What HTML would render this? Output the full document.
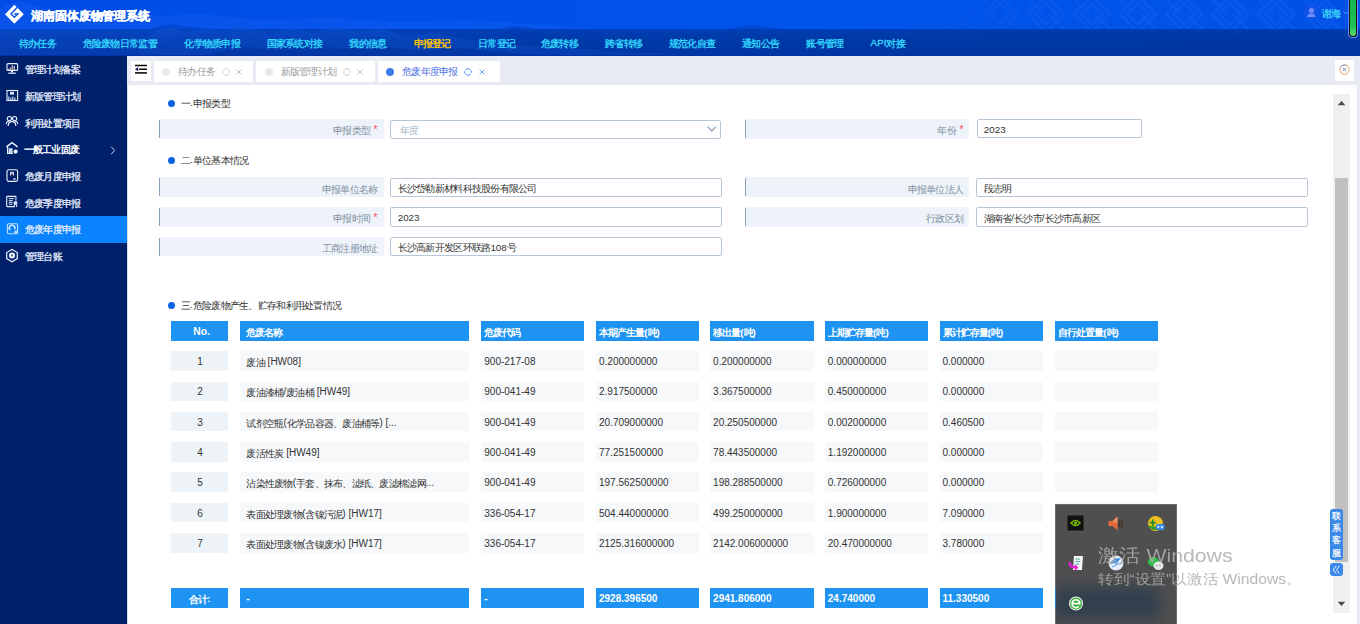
<!DOCTYPE html>
<html><head><meta charset="utf-8"><style>*{margin:0;padding:0;box-sizing:border-box}
html,body{width:1360px;height:624px;overflow:hidden;background:#fff;font-family:"Liberation Sans",sans-serif}
.b{position:absolute}
.t{position:absolute;white-space:nowrap}
</style></head><body>
<div class="b" style="left:0;top:0;width:1360px;height:29px;background:linear-gradient(90deg,#004ce6 0%,#0050ea 30%,#0054ea 60%,#0052e6 100%)"></div>
<svg class="b" style="left:0;top:0" width="1360" height="56" viewBox="0 0 1360 56"><defs>
<linearGradient id="ng" x1="0" x2="0" y1="0" y2="1"><stop offset="0" stop-color="#000" stop-opacity="0"/><stop offset="1" stop-color="#001a70" stop-opacity="0.22"/></linearGradient>
<linearGradient id="nh" x1="0" x2="1" y1="0" y2="0"><stop offset="0" stop-color="#0848c8"/><stop offset="0.15" stop-color="#0442be"/><stop offset="0.5" stop-color="#003eb4"/><stop offset="1" stop-color="#003cb0"/></linearGradient>
</defs>
<path d="M0,8 L12,3 L22,1 L34,5 L50,11 L70,7 L90,12 L120,10 L160,16 L200,14 L260,20 L330,18 L400,22 L470,20 L540,25 L600,29 L0,29 Z" fill="#1a62f2" opacity="0.35"/>
<path d="M0,29 L150,29 L160,26 L175,24 L190,27 L215,29 L500,29 L510,26 L525,27 L535,29 L730,29 L745,25 L760,26 L780,29 Z" fill="#0046d0" opacity="0.8"/>
<rect x="0" y="29" width="1360" height="27" fill="url(#nh)"/>
<path d="M140,56 L140,42 L158,30 L172,27 L186,33 L204,28 L222,31 L238,26 L252,29 L268,34 L290,28 L312,33 L334,27 L356,31 L384,29 L404,36 L430,33 L470,40 L520,45 L580,49 L650,53 L700,56 Z" fill="#0c50d2" opacity="0.55"/>
<path d="M200,56 L240,47 L270,50 L300,44 L340,49 L380,46 L420,51 L460,48 L520,54 L560,56 Z" fill="#0032a0" opacity="0.45"/>
<rect x="0" y="29" width="1360" height="27" fill="url(#ng)"/>
<rect x="0" y="55" width="1360" height="1" fill="#0032a0"/>
</svg>
<svg class="b" style="left:0;top:0" width="1360" height="29" viewBox="0 0 1360 29"><defs><linearGradient id="pg" x1="0" x2="1"><stop offset="0" stop-color="#fff" stop-opacity="0"/><stop offset="0.35" stop-color="#fff" stop-opacity="1"/></linearGradient><mask id="pm"><rect x="900" y="0" width="460" height="29" fill="url(#pg)"/></mask></defs><g mask="url(#pm)" opacity="0.38"><path d="M954,-4 L972,14 L954,32 L936,14 Z" stroke="#1a64f4" stroke-width="2.6" fill="none"/><path d="M954,3 L965,14 L954,25 L943,14 Z" stroke="#1a64f4" stroke-width="2.6" fill="none"/><path d="M977,-6 L997,14 M977,34 L957,14" stroke="#1a64f4" stroke-width="2.2" fill="none"/><path d="M1000,-4 L1018,14 L1000,32 L982,14 Z" stroke="#1a64f4" stroke-width="2.6" fill="none"/><path d="M1000,3 L1011,14 L1000,25 L989,14 Z" stroke="#1a64f4" stroke-width="2.6" fill="none"/><path d="M1023,-6 L1043,14 M1023,34 L1003,14" stroke="#1a64f4" stroke-width="2.2" fill="none"/><path d="M1046,-4 L1064,14 L1046,32 L1028,14 Z" stroke="#1a64f4" stroke-width="2.6" fill="none"/><path d="M1046,3 L1057,14 L1046,25 L1035,14 Z" stroke="#1a64f4" stroke-width="2.6" fill="none"/><path d="M1069,-6 L1089,14 M1069,34 L1049,14" stroke="#1a64f4" stroke-width="2.2" fill="none"/><path d="M1092,-4 L1110,14 L1092,32 L1074,14 Z" stroke="#1a64f4" stroke-width="2.6" fill="none"/><path d="M1092,3 L1103,14 L1092,25 L1081,14 Z" stroke="#1a64f4" stroke-width="2.6" fill="none"/><path d="M1115,-6 L1135,14 M1115,34 L1095,14" stroke="#1a64f4" stroke-width="2.2" fill="none"/><path d="M1138,-4 L1156,14 L1138,32 L1120,14 Z" stroke="#1a64f4" stroke-width="2.6" fill="none"/><path d="M1138,3 L1149,14 L1138,25 L1127,14 Z" stroke="#1a64f4" stroke-width="2.6" fill="none"/><path d="M1161,-6 L1181,14 M1161,34 L1141,14" stroke="#1a64f4" stroke-width="2.2" fill="none"/><path d="M1184,-4 L1202,14 L1184,32 L1166,14 Z" stroke="#1a64f4" stroke-width="2.6" fill="none"/><path d="M1184,3 L1195,14 L1184,25 L1173,14 Z" stroke="#1a64f4" stroke-width="2.6" fill="none"/><path d="M1207,-6 L1227,14 M1207,34 L1187,14" stroke="#1a64f4" stroke-width="2.2" fill="none"/><path d="M1230,-4 L1248,14 L1230,32 L1212,14 Z" stroke="#1a64f4" stroke-width="2.6" fill="none"/><path d="M1230,3 L1241,14 L1230,25 L1219,14 Z" stroke="#1a64f4" stroke-width="2.6" fill="none"/><path d="M1253,-6 L1273,14 M1253,34 L1233,14" stroke="#1a64f4" stroke-width="2.2" fill="none"/><path d="M1276,-4 L1294,14 L1276,32 L1258,14 Z" stroke="#1a64f4" stroke-width="2.6" fill="none"/><path d="M1276,3 L1287,14 L1276,25 L1265,14 Z" stroke="#1a64f4" stroke-width="2.6" fill="none"/><path d="M1299,-6 L1319,14 M1299,34 L1279,14" stroke="#1a64f4" stroke-width="2.2" fill="none"/><path d="M1322,-4 L1340,14 L1322,32 L1304,14 Z" stroke="#1a64f4" stroke-width="2.6" fill="none"/><path d="M1322,3 L1333,14 L1322,25 L1311,14 Z" stroke="#1a64f4" stroke-width="2.6" fill="none"/><path d="M1345,-6 L1365,14 M1345,34 L1325,14" stroke="#1a64f4" stroke-width="2.2" fill="none"/><path d="M1368,-4 L1386,14 L1368,32 L1350,14 Z" stroke="#1a64f4" stroke-width="2.6" fill="none"/><path d="M1368,3 L1379,14 L1368,25 L1357,14 Z" stroke="#1a64f4" stroke-width="2.6" fill="none"/><path d="M1391,-6 L1411,14 M1391,34 L1371,14" stroke="#1a64f4" stroke-width="2.2" fill="none"/></g></svg>
<svg class="b" style="left:0;top:0" width="28" height="29" viewBox="0 0 28 29">
<polygon points="5,14.3 14.4,4.8 23.8,14.3 14.4,23.8" fill="#fff"/>
<polyline points="17.2,7.3 11,13.9 14.4,17.3 17.8,13.9 14.2,13.9" fill="none" stroke="#0a4fe2" stroke-width="1.45" stroke-linejoin="miter"/>
</svg>
<div class="t" style="left:30.8px;top:5.52px;font-size:12px;line-height:20px;color:#fff;font-weight:bold;-webkit-text-stroke:0.35px #fff"><span style="letter-spacing:-0.05px">湖南固体废物管理系统</span></div>
<div class="b" style="left:1304px;top:4px;width:15px;height:15px;border-radius:50%;background:rgba(40,80,230,0.3)"></div>
<svg class="b" style="left:1304px;top:2px" width="15" height="15" viewBox="0 0 15 15">
<circle cx="7.4" cy="8.6" r="2.6" fill="#6f8cff"/><path d="M3.2,15.2 Q3.2,11.6 7.4,11.6 Q11.6,11.6 11.6,15.2 Z" fill="#6f8cff"/></svg>
<div class="t" style="left:1322px;top:4.40px;font-size:9.8px;line-height:20px;color:#40d8f8;font-weight:normal;-webkit-text-stroke:0.3px #40d8f8"><span style="letter-spacing:-0.73px">谢海</span></div>
<svg class="b" style="left:1343px;top:10px" width="6" height="6" viewBox="0 0 6 6"><polyline points="0.5,1.5 3,4 5.5,1.5" stroke="#6a9cff" fill="none" stroke-width="0.9"/></svg>
<div class="t" style="left:18.75px;top:33.50px;font-size:9.8px;line-height:20px;color:#36dcff;font-weight:normal;-webkit-text-stroke:0.3px #36dcff"><span style="letter-spacing:-0.73px">待办任务</span></div>
<div class="t" style="left:82.7px;top:33.50px;font-size:9.8px;line-height:20px;color:#36dcff;font-weight:normal;-webkit-text-stroke:0.3px #36dcff"><span style="letter-spacing:-0.73px">危险废物日常监管</span></div>
<div class="t" style="left:184.4px;top:33.50px;font-size:9.8px;line-height:20px;color:#36dcff;font-weight:normal;-webkit-text-stroke:0.3px #36dcff"><span style="letter-spacing:-0.73px">化学物质申报</span></div>
<div class="t" style="left:266.5px;top:33.50px;font-size:9.8px;line-height:20px;color:#36dcff;font-weight:normal;-webkit-text-stroke:0.3px #36dcff"><span style="letter-spacing:-0.73px">国家系统对接</span></div>
<div class="t" style="left:349.3px;top:33.50px;font-size:9.8px;line-height:20px;color:#36dcff;font-weight:normal;-webkit-text-stroke:0.3px #36dcff"><span style="letter-spacing:-0.73px">我的信息</span></div>
<div class="t" style="left:413.6px;top:33.50px;font-size:9.8px;line-height:20px;color:#ffc400;font-weight:bold;"><span style="letter-spacing:-0.73px">申报登记</span></div>
<div class="t" style="left:478px;top:33.50px;font-size:9.8px;line-height:20px;color:#36dcff;font-weight:normal;-webkit-text-stroke:0.3px #36dcff"><span style="letter-spacing:-0.73px">日常登记</span></div>
<div class="t" style="left:540.8px;top:33.50px;font-size:9.8px;line-height:20px;color:#36dcff;font-weight:normal;-webkit-text-stroke:0.3px #36dcff"><span style="letter-spacing:-0.73px">危废转移</span></div>
<div class="t" style="left:605.1px;top:33.50px;font-size:9.8px;line-height:20px;color:#36dcff;font-weight:normal;-webkit-text-stroke:0.3px #36dcff"><span style="letter-spacing:-0.73px">跨省转移</span></div>
<div class="t" style="left:668.8px;top:33.50px;font-size:9.8px;line-height:20px;color:#36dcff;font-weight:normal;-webkit-text-stroke:0.3px #36dcff"><span style="letter-spacing:-0.73px">规范化自查</span></div>
<div class="t" style="left:742px;top:33.50px;font-size:9.8px;line-height:20px;color:#36dcff;font-weight:normal;-webkit-text-stroke:0.3px #36dcff"><span style="letter-spacing:-0.73px">通知公告</span></div>
<div class="t" style="left:806.3px;top:33.50px;font-size:9.8px;line-height:20px;color:#36dcff;font-weight:normal;-webkit-text-stroke:0.3px #36dcff"><span style="letter-spacing:-0.73px">账号管理</span></div>
<div class="t" style="left:870.6px;top:33.50px;font-size:9.8px;line-height:20px;color:#36dcff;font-weight:normal;-webkit-text-stroke:0.3px #36dcff"><span style="position:relative;top:-0.5px">API</span><span style="letter-spacing:-0.73px">对接</span></div>
<div class="b" style="left:1348px;top:0;width:10px;height:38px;background:#5e8cff;border-radius:0 0 4px 4px"></div>
<div class="b" style="left:1349px;top:0;width:8px;height:37px;background:#141414;border-radius:0 0 3px 3px"></div>
<div class="b" style="left:1350px;top:0;width:6px;height:36px;background:linear-gradient(#18b44e,#1cc054 70%,#5ada6c);border-radius:0 0 3px 3px"></div>
<div class="b" style="left:0px;top:56px;width:127.00px;height:568.00px;background:#00216a;"></div>
<div class="b" style="left:0px;top:216px;width:127.00px;height:27.00px;background:#0a84fe;"></div>
<div class="t" style="left:24.9px;top:60.20px;font-size:9.8px;line-height:20px;color:#eaf0ff;font-weight:normal;-webkit-text-stroke:0.25px #eaf0ff"><span style="letter-spacing:-0.73px">管理计划备案</span></div>
<div class="t" style="left:24.9px;top:86.90px;font-size:9.8px;line-height:20px;color:#eaf0ff;font-weight:normal;-webkit-text-stroke:0.25px #eaf0ff"><span style="letter-spacing:-0.73px">新版管理计划</span></div>
<div class="t" style="left:24.9px;top:113.60px;font-size:9.8px;line-height:20px;color:#eaf0ff;font-weight:normal;-webkit-text-stroke:0.25px #eaf0ff"><span style="letter-spacing:-0.73px">利用处置项目</span></div>
<div class="t" style="left:23.6px;top:140.30px;font-size:9.8px;line-height:20px;color:#fff;font-weight:bold;"><span style="letter-spacing:-0.73px">一般工业固废</span></div>
<div class="t" style="left:24.9px;top:167.00px;font-size:9.8px;line-height:20px;color:#eaf0ff;font-weight:normal;-webkit-text-stroke:0.25px #eaf0ff"><span style="letter-spacing:-0.73px">危废月度申报</span></div>
<div class="t" style="left:24.9px;top:193.70px;font-size:9.8px;line-height:20px;color:#eaf0ff;font-weight:normal;-webkit-text-stroke:0.25px #eaf0ff"><span style="letter-spacing:-0.73px">危废季度申报</span></div>
<div class="t" style="left:24.9px;top:220.40px;font-size:9.8px;line-height:20px;color:#eaf0ff;font-weight:normal;-webkit-text-stroke:0.25px #eaf0ff"><span style="letter-spacing:-0.73px">危废年度申报</span></div>
<div class="t" style="left:24.9px;top:247.10px;font-size:9.8px;line-height:20px;color:#eaf0ff;font-weight:normal;-webkit-text-stroke:0.25px #eaf0ff"><span style="letter-spacing:-0.73px">管理台账</span></div>
<svg class="b" style="left:110px;top:146px" width="6" height="9" viewBox="0 0 6 9"><polyline points="1.2,0.8 4.6,4.5 1.2,8.2" stroke="#c8d4f0" fill="none" stroke-width="1"/></svg>
<svg class="b" style="left:2px;top:60px" width="20" height="20" viewBox="0 0 20 20"><rect x="5" y="3.6" width="10.6" height="6.8" rx="1" stroke="#e8f0ff" fill="none" stroke-width="1.1"/><path d="M6.3,10 L6.3,9 M8.2,10 L8.2,7.5 M10.2,10 L10.2,5.2 M12.2,10 L12.2,6" stroke="#f0d8c8" stroke-width="1.1"/><rect x="9" y="10.4" width="2" height="2" fill="#e8f0ff"/><rect x="6.3" y="12.6" width="7.6" height="1.2" fill="#e8f0ff"/></svg>
<svg class="b" style="left:2px;top:86px" width="20" height="20" viewBox="0 0 20 20"><rect x="5" y="4.5" width="10.6" height="10" stroke="#e8f0ff" fill="none" stroke-width="1.1"/><path d="M6.8,14 L6.8,10.5 M8.8,14 L8.8,11.5 M10.8,14 L10.8,10.5 M12.8,14 L12.8,11.5" stroke="#cfe6ff" stroke-width="1.1"/><rect x="8" y="5.8" width="4" height="2.8" fill="#d8e4ff"/></svg>
<svg class="b" style="left:2px;top:112px" width="20" height="20" viewBox="0 0 20 20"><circle cx="7.4" cy="6.6" r="2.1" stroke="#e8f0ff" fill="none" stroke-width="1.1"/><circle cx="12.6" cy="6.6" r="2.1" stroke="#e8f0ff" fill="none" stroke-width="1.1"/><path d="M4.3,12.2 Q4.3,9.2 7.6,9" stroke="#e8f0ff" fill="none" stroke-width="1.1"/><path d="M15.8,12.2 Q15.8,9.2 12.4,9" stroke="#e8f0ff" fill="none" stroke-width="1.1"/><path d="M6.2,14 Q6.2,9.6 10,9.6 Q13.8,9.6 13.8,14" stroke="#e8f0ff" fill="none" stroke-width="1.2"/></svg>
<svg class="b" style="left:2px;top:139px" width="20" height="20" viewBox="0 0 20 20"><path d="M4.4,7.8 L10,3.6 L15.6,7.8" stroke="#e8f0ff" fill="none" stroke-width="1.5"/><path d="M5.6,7.6 L5.6,14.5 L11,14.5" stroke="#e8f0ff" fill="none" stroke-width="1.2"/><rect x="6.6" y="9.2" width="4" height="5" fill="#c8d8f0"/><circle cx="13.6" cy="12.6" r="2.1" fill="#f0f4ff"/></svg>
<svg class="b" style="left:2px;top:166px" width="20" height="20" viewBox="0 0 20 20"><rect x="5" y="3.8" width="10.6" height="11.6" rx="1.6" stroke="#e8f0ff" fill="none" stroke-width="1.1"/><path d="M8.5,9.5 L8.5,6.3 L11.5,6.3 L11.5,9.5 M8.5,7.8 L11.5,7.8" stroke="#f0e0e8" stroke-width="1" fill="none"/><rect x="11.2" y="12.2" width="2.6" height="1.6" rx=".8" fill="#f0f0ff"/></svg>
<svg class="b" style="left:2px;top:192px" width="20" height="20" viewBox="0 0 20 20"><path d="M12.8,14.6 L5.3,14.6 Q4.7,14.6 4.7,14 L4.7,5 Q4.7,4.4 5.3,4.4 L13.3,4.4 Q13.9,4.4 13.9,5 L13.9,8.6" stroke="#e8f0ff" fill="none" stroke-width="1.1"/><path d="M6.8,6.6 L11.8,6.6 M6.8,8.6 L10.6,8.6 M6.8,10.4 L10.6,10.4 M6.8,12.2 L10.6,12.2" stroke="#e8e8ff" stroke-width="1"/><circle cx="13.5" cy="11" r="2" fill="#d8e0ff"/><path d="M12.5,12.6 L12.2,15 M14.5,12.6 L14.8,15" stroke="#f0f0ff" stroke-width="1"/></svg>
<svg class="b" style="left:2px;top:219px" width="20" height="20" viewBox="0 0 20 20"><rect x="5.4" y="4.8" width="10.2" height="10" rx="1.2" stroke="#bfe2ff" fill="none" stroke-width="1.1"/><path d="M8.2,11 A2.8,2.8 0 1 1 12.6,10.2" stroke="#d8ecff" fill="none" stroke-width="1.5"/><circle cx="13.8" cy="13" r="1.8" fill="#a8d4ff"/></svg>
<svg class="b" style="left:2px;top:246px" width="20" height="20" viewBox="0 0 20 20"><path d="M10,3.4 L15.3,6.5 L15.3,12.6 L10,15.7 L4.7,12.6 L4.7,6.5 Z" stroke="#e8f0ff" fill="none" stroke-width="1.2"/><circle cx="10" cy="9.5" r="3" fill="#f4f8ff"/><circle cx="10" cy="9.5" r="0.9" fill="#30306a"/></svg>
<div class="b" style="left:127px;top:56px;width:1233.00px;height:29.00px;background:#e8ebf3;"></div>
<div class="b" style="left:130.9px;top:60.9px;width:20.10px;height:20.00px;background:#fff;"></div>
<svg class="b" style="left:130px;top:58px" width="22" height="22" viewBox="0 0 22 22">
<rect x="5" y="6.75" width="11.9" height="1.5" fill="#000"/>
<rect x="9.2" y="10.5" width="7.7" height="1.5" fill="#000"/>
<rect x="5" y="14.15" width="11.9" height="1.5" fill="#000"/>
<polygon points="5,11.25 8.2,9.3 8.2,13.2" fill="#101060"/>
</svg>
<div class="b" style="left:154.1px;top:61px;width:98.90px;height:20.80px;background:#fff;"></div>
<div class="b" style="left:162px;top:68px;width:8px;height:8px;border-radius:50%;background:#e8e9ec"></div>
<div class="t" style="left:178px;top:62.10px;font-size:9.8px;line-height:20px;color:#9a9a9a;font-weight:normal;"><span style="letter-spacing:-0.73px">待办任务</span></div>
<svg class="b" style="left:220.7px;top:66.6px" width="10" height="10" viewBox="0 0 10 10"><path d="M3.11,2.3 A3.3,3.3 0 0 1 8.19,5.85 M6.89,7.7 A3.3,3.3 0 0 1 1.9,3.87" stroke="#cfd3da" fill="none" stroke-width="1"/><circle cx="3.2" cy="2.4" r="0.75" fill="#cfd3da"/><circle cx="6.8" cy="7.6" r="0.75" fill="#cfd3da"/></svg>
<svg class="b" style="left:235.3px;top:68px" width="8" height="8" viewBox="0 0 8 8"><path d="M1.6,1.6 L6.4,6.4 M6.4,1.6 L1.6,6.4" stroke="#b8bcc4" stroke-width="1"/></svg>
<div class="b" style="left:255.7px;top:61px;width:119.50px;height:20.80px;background:#fff;"></div>
<div class="b" style="left:264.7px;top:68px;width:8px;height:8px;border-radius:50%;background:#e8e9ec"></div>
<div class="t" style="left:280.6px;top:62.10px;font-size:9.8px;line-height:20px;color:#9a9a9a;font-weight:normal;"><span style="letter-spacing:-0.73px">新版管理计划</span></div>
<svg class="b" style="left:342px;top:66.6px" width="10" height="10" viewBox="0 0 10 10"><path d="M3.11,2.3 A3.3,3.3 0 0 1 8.19,5.85 M6.89,7.7 A3.3,3.3 0 0 1 1.9,3.87" stroke="#cfd3da" fill="none" stroke-width="1"/><circle cx="3.2" cy="2.4" r="0.75" fill="#cfd3da"/><circle cx="6.8" cy="7.6" r="0.75" fill="#cfd3da"/></svg>
<svg class="b" style="left:356.3px;top:68px" width="8" height="8" viewBox="0 0 8 8"><path d="M1.6,1.6 L6.4,6.4 M6.4,1.6 L1.6,6.4" stroke="#b8bcc4" stroke-width="1"/></svg>
<div class="b" style="left:377.7px;top:61px;width:122.30px;height:20.80px;background:#fff;"></div>
<div class="b" style="left:386px;top:68px;width:8px;height:8px;border-radius:50%;background:#3b7be8"></div>
<div class="t" style="left:402px;top:62.10px;font-size:9.8px;line-height:20px;color:#4d6ee2;font-weight:normal;"><span style="letter-spacing:-0.73px">危废年度申报</span></div>
<svg class="b" style="left:463.4px;top:66.6px" width="10" height="10" viewBox="0 0 10 10"><path d="M3.11,2.3 A3.3,3.3 0 0 1 8.19,5.85 M6.89,7.7 A3.3,3.3 0 0 1 1.9,3.87" stroke="#5c9cf5" fill="none" stroke-width="1"/><circle cx="3.2" cy="2.4" r="0.75" fill="#5c9cf5"/><circle cx="6.8" cy="7.6" r="0.75" fill="#5c9cf5"/></svg>
<svg class="b" style="left:478.3px;top:68px" width="8" height="8" viewBox="0 0 8 8"><path d="M1.6,1.6 L6.4,6.4 M6.4,1.6 L1.6,6.4" stroke="#6aa0f2" stroke-width="1"/></svg>
<div class="b" style="left:1334.8px;top:59.6px;width:19.60px;height:21.70px;background:#fff;"></div>
<svg class="b" style="left:1338px;top:63px" width="13" height="13" viewBox="0 0 13 13">
<circle cx="6.5" cy="6.6" r="4.7" stroke="#e6a25a" fill="none" stroke-width="1"/>
<path d="M2.3,4.6 A4.7,4.7 0 0 1 8.6,2.4" stroke="#7aa0e6" fill="none" stroke-width="1"/>
<path d="M4.8,4.9 L8.2,8.3 M8.2,4.9 L4.8,8.3" stroke="#7080a8" stroke-width="1"/>
</svg>
<div class="b" style="left:128px;top:85px;width:1229.00px;height:539.00px;background:#fff;"></div>
<div class="b" style="left:127px;top:85px;width:1.00px;height:539.00px;background:#d8dce4;"></div>
<div class="b" style="left:167.5px;top:99.7px;width:7px;height:7px;border-radius:50%;background:#0b63e0"></div>
<div class="t" style="left:180.8px;top:94.00px;font-size:9.8px;line-height:20px;color:#333;font-weight:normal;"><span style="letter-spacing:-0.73px">一</span><span style="position:relative;top:-1.0px">.</span><span style="letter-spacing:-0.73px">申报类型</span></div>
<div class="b" style="left:159px;top:119px;width:224.60px;height:19.50px;background:#eef3f9;border-radius:2px"></div>
<div class="b" style="left:159px;top:119.5px;width:1.00px;height:18.50px;background:#8ba0b6;"></div>
<div class="t" style="right:989.9px;top:121.15px;font-size:9.8px;line-height:20px;color:#8090a4;font-weight:normal;text-align:right;"><span style="letter-spacing:-0.73px">申报类型</span></div>
<div class="t" style="left:373.6px;top:122.65px;font-size:10px;line-height:14px;color:#f5475a">*</div>
<div class="b" style="left:390.2px;top:120px;width:331.30px;height:18.50px;border:1px solid #b8c7d8;border-radius:2px;background:#fff"></div>
<div class="t" style="left:399.8px;top:120.55px;font-size:9.8px;line-height:20px;color:#a9b6c4;font-weight:normal;"><span style="letter-spacing:-0.73px">年度</span></div>
<svg class="b" style="left:706px;top:125px" width="12" height="8" viewBox="0 0 12 8"><polyline points="1.6,1.8 5.8,5.9 10,1.8" fill="none" stroke="#a0b2c4" stroke-width="1.6"/></svg>
<div class="b" style="left:745.4px;top:119px;width:224.10px;height:19.50px;background:#eef3f9;border-radius:2px"></div>
<div class="b" style="left:745.4px;top:119.5px;width:1.00px;height:18.50px;background:#8ba0b6;"></div>
<div class="t" style="right:404.0px;top:121.15px;font-size:9.8px;line-height:20px;color:#8090a4;font-weight:normal;text-align:right;"><span style="letter-spacing:-0.73px">年份</span></div>
<div class="t" style="left:959.5px;top:122.65px;font-size:10px;line-height:14px;color:#f5475a">*</div>
<div class="b" style="left:976.5px;top:119.4px;width:165.00px;height:19.10px;border:1px solid #b8c7d8;border-radius:2px;background:#fff"></div>
<div class="t" style="left:983.8px;top:120.45px;font-size:9.8px;line-height:20px;color:#333;font-weight:normal;"><span style="position:relative;top:-0.8px">2023</span></div>
<div class="b" style="left:167.5px;top:156.5px;width:7px;height:7px;border-radius:50%;background:#0b63e0"></div>
<div class="t" style="left:180.8px;top:150.80px;font-size:9.8px;line-height:20px;color:#333;font-weight:normal;"><span style="letter-spacing:-0.73px">二</span><span style="position:relative;top:-1.0px">.</span><span style="letter-spacing:-0.73px">单位基本情况</span></div>
<div class="b" style="left:159px;top:177.3px;width:224.60px;height:19.60px;background:#eef3f9;border-radius:2px"></div>
<div class="b" style="left:159px;top:177.8px;width:1.00px;height:18.60px;background:#8ba0b6;"></div>
<div class="t" style="right:982.5999999999999px;top:179.50px;font-size:9.8px;line-height:20px;color:#8090a4;font-weight:normal;text-align:right;"><span style="letter-spacing:-0.73px">申报单位名称</span></div>
<div class="b" style="left:390.4px;top:177.6px;width:331.30px;height:19.30px;border:1px solid #b8c7d8;border-radius:2px;background:#fff"></div>
<div class="t" style="left:397.7px;top:178.75px;font-size:9.8px;line-height:20px;color:#333;font-weight:normal;"><span style="letter-spacing:-0.73px">长沙岱勒新材料科技股份有限公司</span></div>
<div class="b" style="left:745.4px;top:177.3px;width:224.10px;height:19.60px;background:#eef3f9;border-radius:2px"></div>
<div class="b" style="left:745.4px;top:177.8px;width:1.00px;height:18.60px;background:#8ba0b6;"></div>
<div class="t" style="right:396.70000000000005px;top:179.50px;font-size:9.8px;line-height:20px;color:#8090a4;font-weight:normal;text-align:right;"><span style="letter-spacing:-0.73px">申报单位法人</span></div>
<div class="b" style="left:976.2px;top:177.6px;width:331.50px;height:19.30px;border:1px solid #b8c7d8;border-radius:2px;background:#fff"></div>
<div class="t" style="left:983.5px;top:178.75px;font-size:9.8px;line-height:20px;color:#333;font-weight:normal;"><span style="letter-spacing:-0.73px">段志明</span></div>
<div class="b" style="left:159px;top:207px;width:224.60px;height:19.70px;background:#eef3f9;border-radius:2px"></div>
<div class="b" style="left:159px;top:207.5px;width:1.00px;height:18.70px;background:#8ba0b6;"></div>
<div class="t" style="right:989.9px;top:209.25px;font-size:9.8px;line-height:20px;color:#8090a4;font-weight:normal;text-align:right;"><span style="letter-spacing:-0.73px">申报时间</span></div>
<div class="t" style="left:373.6px;top:210.75px;font-size:10px;line-height:14px;color:#f5475a">*</div>
<div class="b" style="left:390.4px;top:207.3px;width:331.30px;height:19.40px;border:1px solid #b8c7d8;border-radius:2px;background:#fff"></div>
<div class="t" style="left:397.7px;top:208.50px;font-size:9.8px;line-height:20px;color:#333;font-weight:normal;"><span style="position:relative;top:-0.8px">2023</span></div>
<div class="b" style="left:745.4px;top:207px;width:224.10px;height:19.70px;background:#eef3f9;border-radius:2px"></div>
<div class="b" style="left:745.4px;top:207.5px;width:1.00px;height:18.70px;background:#8ba0b6;"></div>
<div class="t" style="right:396.70000000000005px;top:209.25px;font-size:9.8px;line-height:20px;color:#8090a4;font-weight:normal;text-align:right;"><span style="letter-spacing:-0.73px">行政区划</span></div>
<div class="b" style="left:976.2px;top:207.3px;width:331.50px;height:19.40px;border:1px solid #b8c7d8;border-radius:2px;background:#fff"></div>
<div class="t" style="left:983.5px;top:208.50px;font-size:9.8px;line-height:20px;color:#333;font-weight:normal;"><span style="letter-spacing:-0.73px">湖南省</span><span style="position:relative;top:-0.8px">/</span><span style="letter-spacing:-0.73px">长沙市</span><span style="position:relative;top:-0.8px">/</span><span style="letter-spacing:-0.73px">长沙市高新区</span></div>
<div class="b" style="left:159px;top:237.3px;width:224.60px;height:19.20px;background:#eef3f9;border-radius:2px"></div>
<div class="b" style="left:159px;top:237.8px;width:1.00px;height:18.20px;background:#8ba0b6;"></div>
<div class="t" style="right:982.5999999999999px;top:239.30px;font-size:9.8px;line-height:20px;color:#8090a4;font-weight:normal;text-align:right;"><span style="letter-spacing:-0.73px">工商注册地址</span></div>
<div class="b" style="left:390.4px;top:237.3px;width:331.30px;height:19.20px;border:1px solid #b8c7d8;border-radius:2px;background:#fff"></div>
<div class="t" style="left:397.7px;top:238.40px;font-size:9.8px;line-height:20px;color:#333;font-weight:normal;"><span style="letter-spacing:-0.73px">长沙高新开发区环联路</span><span style="position:relative;top:-0.8px">108</span><span style="letter-spacing:-0.73px">号</span></div>
<div class="b" style="left:167.5px;top:301.5px;width:7px;height:7px;border-radius:50%;background:#0b63e0"></div>
<div class="t" style="left:180.8px;top:295.80px;font-size:9.8px;line-height:20px;color:#333;font-weight:normal;"><span style="letter-spacing:-0.73px">三</span><span style="position:relative;top:-1.0px">.</span><span style="letter-spacing:-0.73px">危险废物产生、贮存和利用处置情况</span></div>
<div class="b" style="left:171px;top:320.9px;width:57.00px;height:20.10px;background:#1f93f1;"></div>
<div class="t" style="left:101.5px;width:200px;text-align:center;top:322.50px;font-size:9.8px;line-height:20px;color:#fff;font-weight:bold;"><span style="position:relative;top:-0.3px;font-size:10.3px">No.</span></div>
<div class="b" style="left:240px;top:320.9px;width:228.60px;height:20.10px;background:#1f93f1;"></div>
<div class="t" style="left:246.3px;top:323.10px;font-size:9.8px;line-height:20px;color:#fff;font-weight:bold;"><span style="letter-spacing:-0.95px">危废名称</span></div>
<div class="b" style="left:481px;top:320.9px;width:102.90px;height:20.10px;background:#1f93f1;"></div>
<div class="t" style="left:484.3px;top:323.10px;font-size:9.8px;line-height:20px;color:#fff;font-weight:bold;"><span style="letter-spacing:-0.95px">危废代码</span></div>
<div class="b" style="left:596px;top:320.9px;width:103.10px;height:20.10px;background:#1f93f1;"></div>
<div class="t" style="left:599.0px;top:323.10px;font-size:9.8px;line-height:20px;color:#fff;font-weight:bold;"><span style="letter-spacing:-0.95px">本期产生量</span><span style="position:relative;top:-0.5px">(</span><span style="letter-spacing:-0.95px">吨</span><span style="position:relative;top:-0.5px">)</span></div>
<div class="b" style="left:710.1px;top:320.9px;width:103.70px;height:20.10px;background:#1f93f1;"></div>
<div class="t" style="left:713.1px;top:323.10px;font-size:9.8px;line-height:20px;color:#fff;font-weight:bold;"><span style="letter-spacing:-0.95px">移出量</span><span style="position:relative;top:-0.5px">(</span><span style="letter-spacing:-0.95px">吨</span><span style="position:relative;top:-0.5px">)</span></div>
<div class="b" style="left:824.8px;top:320.9px;width:103.70px;height:20.10px;background:#1f93f1;"></div>
<div class="t" style="left:827.8px;top:323.10px;font-size:9.8px;line-height:20px;color:#fff;font-weight:bold;"><span style="letter-spacing:-0.95px">上期贮存量</span><span style="position:relative;top:-0.5px">(</span><span style="letter-spacing:-0.95px">吨</span><span style="position:relative;top:-0.5px">)</span></div>
<div class="b" style="left:939.5px;top:320.9px;width:103.70px;height:20.10px;background:#1f93f1;"></div>
<div class="t" style="left:942.5px;top:323.10px;font-size:9.8px;line-height:20px;color:#fff;font-weight:bold;"><span style="letter-spacing:-0.95px">累计贮存量</span><span style="position:relative;top:-0.5px">(</span><span style="letter-spacing:-0.95px">吨</span><span style="position:relative;top:-0.5px">)</span></div>
<div class="b" style="left:1055px;top:320.9px;width:102.90px;height:20.10px;background:#1f93f1;"></div>
<div class="t" style="left:1058.0px;top:323.10px;font-size:9.8px;line-height:20px;color:#fff;font-weight:bold;"><span style="letter-spacing:-0.95px">自行处置量</span><span style="position:relative;top:-0.5px">(</span><span style="letter-spacing:-0.95px">吨</span><span style="position:relative;top:-0.5px">)</span></div>
<div class="b" style="left:171px;top:351.2px;width:57.00px;height:19.60px;background:#eef3f8;"></div>
<div class="t" style="left:100.0px;width:200px;text-align:center;top:353.10px;font-size:9.8px;line-height:20px;color:#333;font-weight:normal;"><span style="position:relative;top:-1px;font-size:10px">1</span></div>
<div class="b" style="left:240px;top:351.2px;width:228.60px;height:19.60px;background:#f6f8fa;"></div>
<div class="t" style="left:246.3px;top:353.10px;font-size:9.8px;line-height:20px;color:#333;font-weight:normal;"><span style="letter-spacing:-0.73px">废油</span><span style="position:relative;top:-1.0px;font-size:10px"> [HW08]</span></div>
<div class="b" style="left:481px;top:351.2px;width:102.90px;height:19.60px;background:#f6f8fa;"></div>
<div class="t" style="left:484.3px;top:353.10px;font-size:9.8px;line-height:20px;color:#333;font-weight:normal;"><span style="position:relative;top:-1.0px;font-size:10px">900-217-08</span></div>
<div class="b" style="left:596px;top:351.2px;width:103.10px;height:19.60px;background:#f6f8fa;"></div>
<div class="t" style="left:599.0px;top:353.10px;font-size:9.8px;line-height:20px;color:#333;font-weight:normal;"><span style="position:relative;top:-1.0px;font-size:10px">0.200000000</span></div>
<div class="b" style="left:710.1px;top:351.2px;width:103.70px;height:19.60px;background:#f6f8fa;"></div>
<div class="t" style="left:713.1px;top:353.10px;font-size:9.8px;line-height:20px;color:#333;font-weight:normal;"><span style="position:relative;top:-1.0px;font-size:10px">0.200000000</span></div>
<div class="b" style="left:824.8px;top:351.2px;width:103.70px;height:19.60px;background:#f6f8fa;"></div>
<div class="t" style="left:827.8px;top:353.10px;font-size:9.8px;line-height:20px;color:#333;font-weight:normal;"><span style="position:relative;top:-1.0px;font-size:10px">0.000000000</span></div>
<div class="b" style="left:939.5px;top:351.2px;width:103.70px;height:19.60px;background:#f6f8fa;"></div>
<div class="t" style="left:942.5px;top:353.10px;font-size:9.8px;line-height:20px;color:#333;font-weight:normal;"><span style="position:relative;top:-1.0px;font-size:10px">0.000000</span></div>
<div class="b" style="left:1055px;top:351.2px;width:102.90px;height:19.60px;background:#f6f8fa;"></div>
<div class="b" style="left:171px;top:381.5px;width:57.00px;height:19.60px;background:#eef3f8;"></div>
<div class="t" style="left:100.0px;width:200px;text-align:center;top:383.40px;font-size:9.8px;line-height:20px;color:#333;font-weight:normal;"><span style="position:relative;top:-1px;font-size:10px">2</span></div>
<div class="b" style="left:240px;top:381.5px;width:228.60px;height:19.60px;background:#f6f8fa;"></div>
<div class="t" style="left:246.3px;top:383.40px;font-size:9.8px;line-height:20px;color:#333;font-weight:normal;"><span style="letter-spacing:-0.73px">废油漆桶</span><span style="position:relative;top:-1.0px;font-size:10px">/</span><span style="letter-spacing:-0.73px">废油桶</span><span style="position:relative;top:-1.0px;font-size:10px"> [HW49]</span></div>
<div class="b" style="left:481px;top:381.5px;width:102.90px;height:19.60px;background:#f6f8fa;"></div>
<div class="t" style="left:484.3px;top:383.40px;font-size:9.8px;line-height:20px;color:#333;font-weight:normal;"><span style="position:relative;top:-1.0px;font-size:10px">900-041-49</span></div>
<div class="b" style="left:596px;top:381.5px;width:103.10px;height:19.60px;background:#f6f8fa;"></div>
<div class="t" style="left:599.0px;top:383.40px;font-size:9.8px;line-height:20px;color:#333;font-weight:normal;"><span style="position:relative;top:-1.0px;font-size:10px">2.917500000</span></div>
<div class="b" style="left:710.1px;top:381.5px;width:103.70px;height:19.60px;background:#f6f8fa;"></div>
<div class="t" style="left:713.1px;top:383.40px;font-size:9.8px;line-height:20px;color:#333;font-weight:normal;"><span style="position:relative;top:-1.0px;font-size:10px">3.367500000</span></div>
<div class="b" style="left:824.8px;top:381.5px;width:103.70px;height:19.60px;background:#f6f8fa;"></div>
<div class="t" style="left:827.8px;top:383.40px;font-size:9.8px;line-height:20px;color:#333;font-weight:normal;"><span style="position:relative;top:-1.0px;font-size:10px">0.450000000</span></div>
<div class="b" style="left:939.5px;top:381.5px;width:103.70px;height:19.60px;background:#f6f8fa;"></div>
<div class="t" style="left:942.5px;top:383.40px;font-size:9.8px;line-height:20px;color:#333;font-weight:normal;"><span style="position:relative;top:-1.0px;font-size:10px">0.000000</span></div>
<div class="b" style="left:1055px;top:381.5px;width:102.90px;height:19.60px;background:#f6f8fa;"></div>
<div class="b" style="left:171px;top:411.8px;width:57.00px;height:19.60px;background:#eef3f8;"></div>
<div class="t" style="left:100.0px;width:200px;text-align:center;top:413.70px;font-size:9.8px;line-height:20px;color:#333;font-weight:normal;"><span style="position:relative;top:-1px;font-size:10px">3</span></div>
<div class="b" style="left:240px;top:411.8px;width:228.60px;height:19.60px;background:#f6f8fa;"></div>
<div class="t" style="left:246.3px;top:413.70px;font-size:9.8px;line-height:20px;color:#333;font-weight:normal;"><span style="letter-spacing:-0.73px">试剂空瓶</span><span style="position:relative;top:-1.0px;font-size:10px">(</span><span style="letter-spacing:-0.73px">化学品容器、废油桶等</span><span style="position:relative;top:-1.0px;font-size:10px">) [...</span></div>
<div class="b" style="left:481px;top:411.8px;width:102.90px;height:19.60px;background:#f6f8fa;"></div>
<div class="t" style="left:484.3px;top:413.70px;font-size:9.8px;line-height:20px;color:#333;font-weight:normal;"><span style="position:relative;top:-1.0px;font-size:10px">900-041-49</span></div>
<div class="b" style="left:596px;top:411.8px;width:103.10px;height:19.60px;background:#f6f8fa;"></div>
<div class="t" style="left:599.0px;top:413.70px;font-size:9.8px;line-height:20px;color:#333;font-weight:normal;"><span style="position:relative;top:-1.0px;font-size:10px">20.709000000</span></div>
<div class="b" style="left:710.1px;top:411.8px;width:103.70px;height:19.60px;background:#f6f8fa;"></div>
<div class="t" style="left:713.1px;top:413.70px;font-size:9.8px;line-height:20px;color:#333;font-weight:normal;"><span style="position:relative;top:-1.0px;font-size:10px">20.250500000</span></div>
<div class="b" style="left:824.8px;top:411.8px;width:103.70px;height:19.60px;background:#f6f8fa;"></div>
<div class="t" style="left:827.8px;top:413.70px;font-size:9.8px;line-height:20px;color:#333;font-weight:normal;"><span style="position:relative;top:-1.0px;font-size:10px">0.002000000</span></div>
<div class="b" style="left:939.5px;top:411.8px;width:103.70px;height:19.60px;background:#f6f8fa;"></div>
<div class="t" style="left:942.5px;top:413.70px;font-size:9.8px;line-height:20px;color:#333;font-weight:normal;"><span style="position:relative;top:-1.0px;font-size:10px">0.460500</span></div>
<div class="b" style="left:1055px;top:411.8px;width:102.90px;height:19.60px;background:#f6f8fa;"></div>
<div class="b" style="left:171px;top:442.1px;width:57.00px;height:19.60px;background:#eef3f8;"></div>
<div class="t" style="left:100.0px;width:200px;text-align:center;top:444.00px;font-size:9.8px;line-height:20px;color:#333;font-weight:normal;"><span style="position:relative;top:-1px;font-size:10px">4</span></div>
<div class="b" style="left:240px;top:442.1px;width:228.60px;height:19.60px;background:#f6f8fa;"></div>
<div class="t" style="left:246.3px;top:444.00px;font-size:9.8px;line-height:20px;color:#333;font-weight:normal;"><span style="letter-spacing:-0.73px">废活性炭</span><span style="position:relative;top:-1.0px;font-size:10px"> [HW49]</span></div>
<div class="b" style="left:481px;top:442.1px;width:102.90px;height:19.60px;background:#f6f8fa;"></div>
<div class="t" style="left:484.3px;top:444.00px;font-size:9.8px;line-height:20px;color:#333;font-weight:normal;"><span style="position:relative;top:-1.0px;font-size:10px">900-041-49</span></div>
<div class="b" style="left:596px;top:442.1px;width:103.10px;height:19.60px;background:#f6f8fa;"></div>
<div class="t" style="left:599.0px;top:444.00px;font-size:9.8px;line-height:20px;color:#333;font-weight:normal;"><span style="position:relative;top:-1.0px;font-size:10px">77.251500000</span></div>
<div class="b" style="left:710.1px;top:442.1px;width:103.70px;height:19.60px;background:#f6f8fa;"></div>
<div class="t" style="left:713.1px;top:444.00px;font-size:9.8px;line-height:20px;color:#333;font-weight:normal;"><span style="position:relative;top:-1.0px;font-size:10px">78.443500000</span></div>
<div class="b" style="left:824.8px;top:442.1px;width:103.70px;height:19.60px;background:#f6f8fa;"></div>
<div class="t" style="left:827.8px;top:444.00px;font-size:9.8px;line-height:20px;color:#333;font-weight:normal;"><span style="position:relative;top:-1.0px;font-size:10px">1.192000000</span></div>
<div class="b" style="left:939.5px;top:442.1px;width:103.70px;height:19.60px;background:#f6f8fa;"></div>
<div class="t" style="left:942.5px;top:444.00px;font-size:9.8px;line-height:20px;color:#333;font-weight:normal;"><span style="position:relative;top:-1.0px;font-size:10px">0.000000</span></div>
<div class="b" style="left:1055px;top:442.1px;width:102.90px;height:19.60px;background:#f6f8fa;"></div>
<div class="b" style="left:171px;top:472.4px;width:57.00px;height:19.60px;background:#eef3f8;"></div>
<div class="t" style="left:100.0px;width:200px;text-align:center;top:474.30px;font-size:9.8px;line-height:20px;color:#333;font-weight:normal;"><span style="position:relative;top:-1px;font-size:10px">5</span></div>
<div class="b" style="left:240px;top:472.4px;width:228.60px;height:19.60px;background:#f6f8fa;"></div>
<div class="t" style="left:246.3px;top:474.30px;font-size:9.8px;line-height:20px;color:#333;font-weight:normal;"><span style="letter-spacing:-0.73px">沾染性废物</span><span style="position:relative;top:-1.0px;font-size:10px">(</span><span style="letter-spacing:-0.73px">手套、抹布、滤纸、废滤棉滤网</span><span style="position:relative;top:-1.0px;font-size:10px">...</span></div>
<div class="b" style="left:481px;top:472.4px;width:102.90px;height:19.60px;background:#f6f8fa;"></div>
<div class="t" style="left:484.3px;top:474.30px;font-size:9.8px;line-height:20px;color:#333;font-weight:normal;"><span style="position:relative;top:-1.0px;font-size:10px">900-041-49</span></div>
<div class="b" style="left:596px;top:472.4px;width:103.10px;height:19.60px;background:#f6f8fa;"></div>
<div class="t" style="left:599.0px;top:474.30px;font-size:9.8px;line-height:20px;color:#333;font-weight:normal;"><span style="position:relative;top:-1.0px;font-size:10px">197.562500000</span></div>
<div class="b" style="left:710.1px;top:472.4px;width:103.70px;height:19.60px;background:#f6f8fa;"></div>
<div class="t" style="left:713.1px;top:474.30px;font-size:9.8px;line-height:20px;color:#333;font-weight:normal;"><span style="position:relative;top:-1.0px;font-size:10px">198.288500000</span></div>
<div class="b" style="left:824.8px;top:472.4px;width:103.70px;height:19.60px;background:#f6f8fa;"></div>
<div class="t" style="left:827.8px;top:474.30px;font-size:9.8px;line-height:20px;color:#333;font-weight:normal;"><span style="position:relative;top:-1.0px;font-size:10px">0.726000000</span></div>
<div class="b" style="left:939.5px;top:472.4px;width:103.70px;height:19.60px;background:#f6f8fa;"></div>
<div class="t" style="left:942.5px;top:474.30px;font-size:9.8px;line-height:20px;color:#333;font-weight:normal;"><span style="position:relative;top:-1.0px;font-size:10px">0.000000</span></div>
<div class="b" style="left:1055px;top:472.4px;width:102.90px;height:19.60px;background:#f6f8fa;"></div>
<div class="b" style="left:171px;top:502.7px;width:57.00px;height:19.60px;background:#eef3f8;"></div>
<div class="t" style="left:100.0px;width:200px;text-align:center;top:504.60px;font-size:9.8px;line-height:20px;color:#333;font-weight:normal;"><span style="position:relative;top:-1px;font-size:10px">6</span></div>
<div class="b" style="left:240px;top:502.7px;width:228.60px;height:19.60px;background:#f6f8fa;"></div>
<div class="t" style="left:246.3px;top:504.60px;font-size:9.8px;line-height:20px;color:#333;font-weight:normal;"><span style="letter-spacing:-0.73px">表面处理废物</span><span style="position:relative;top:-1.0px;font-size:10px">(</span><span style="letter-spacing:-0.73px">含镍污泥</span><span style="position:relative;top:-1.0px;font-size:10px">) [HW17]</span></div>
<div class="b" style="left:481px;top:502.7px;width:102.90px;height:19.60px;background:#f6f8fa;"></div>
<div class="t" style="left:484.3px;top:504.60px;font-size:9.8px;line-height:20px;color:#333;font-weight:normal;"><span style="position:relative;top:-1.0px;font-size:10px">336-054-17</span></div>
<div class="b" style="left:596px;top:502.7px;width:103.10px;height:19.60px;background:#f6f8fa;"></div>
<div class="t" style="left:599.0px;top:504.60px;font-size:9.8px;line-height:20px;color:#333;font-weight:normal;"><span style="position:relative;top:-1.0px;font-size:10px">504.440000000</span></div>
<div class="b" style="left:710.1px;top:502.7px;width:103.70px;height:19.60px;background:#f6f8fa;"></div>
<div class="t" style="left:713.1px;top:504.60px;font-size:9.8px;line-height:20px;color:#333;font-weight:normal;"><span style="position:relative;top:-1.0px;font-size:10px">499.250000000</span></div>
<div class="b" style="left:824.8px;top:502.7px;width:103.70px;height:19.60px;background:#f6f8fa;"></div>
<div class="t" style="left:827.8px;top:504.60px;font-size:9.8px;line-height:20px;color:#333;font-weight:normal;"><span style="position:relative;top:-1.0px;font-size:10px">1.900000000</span></div>
<div class="b" style="left:939.5px;top:502.7px;width:103.70px;height:19.60px;background:#f6f8fa;"></div>
<div class="t" style="left:942.5px;top:504.60px;font-size:9.8px;line-height:20px;color:#333;font-weight:normal;"><span style="position:relative;top:-1.0px;font-size:10px">7.090000</span></div>
<div class="b" style="left:1055px;top:502.7px;width:102.90px;height:19.60px;background:#f6f8fa;"></div>
<div class="b" style="left:171px;top:533.0px;width:57.00px;height:19.60px;background:#eef3f8;"></div>
<div class="t" style="left:100.0px;width:200px;text-align:center;top:534.90px;font-size:9.8px;line-height:20px;color:#333;font-weight:normal;"><span style="position:relative;top:-1px;font-size:10px">7</span></div>
<div class="b" style="left:240px;top:533.0px;width:228.60px;height:19.60px;background:#f6f8fa;"></div>
<div class="t" style="left:246.3px;top:534.90px;font-size:9.8px;line-height:20px;color:#333;font-weight:normal;"><span style="letter-spacing:-0.73px">表面处理废物</span><span style="position:relative;top:-1.0px;font-size:10px">(</span><span style="letter-spacing:-0.73px">含镍废水</span><span style="position:relative;top:-1.0px;font-size:10px">) [HW17]</span></div>
<div class="b" style="left:481px;top:533.0px;width:102.90px;height:19.60px;background:#f6f8fa;"></div>
<div class="t" style="left:484.3px;top:534.90px;font-size:9.8px;line-height:20px;color:#333;font-weight:normal;"><span style="position:relative;top:-1.0px;font-size:10px">336-054-17</span></div>
<div class="b" style="left:596px;top:533.0px;width:103.10px;height:19.60px;background:#f6f8fa;"></div>
<div class="t" style="left:599.0px;top:534.90px;font-size:9.8px;line-height:20px;color:#333;font-weight:normal;"><span style="position:relative;top:-1.0px;font-size:10px">2125.316000000</span></div>
<div class="b" style="left:710.1px;top:533.0px;width:103.70px;height:19.60px;background:#f6f8fa;"></div>
<div class="t" style="left:713.1px;top:534.90px;font-size:9.8px;line-height:20px;color:#333;font-weight:normal;"><span style="position:relative;top:-1.0px;font-size:10px">2142.006000000</span></div>
<div class="b" style="left:824.8px;top:533.0px;width:103.70px;height:19.60px;background:#f6f8fa;"></div>
<div class="t" style="left:827.8px;top:534.90px;font-size:9.8px;line-height:20px;color:#333;font-weight:normal;"><span style="position:relative;top:-1.0px;font-size:10px">20.470000000</span></div>
<div class="b" style="left:939.5px;top:533.0px;width:103.70px;height:19.60px;background:#f6f8fa;"></div>
<div class="t" style="left:942.5px;top:534.90px;font-size:9.8px;line-height:20px;color:#333;font-weight:normal;"><span style="position:relative;top:-1.0px;font-size:10px">3.780000</span></div>
<div class="b" style="left:1055px;top:533.0px;width:102.90px;height:19.60px;background:#f6f8fa;"></div>
<div class="b" style="left:171px;top:588px;width:57.00px;height:19.80px;background:#1f93f1;"></div>
<div class="t" style="left:99.5px;width:200px;text-align:center;top:590.00px;font-size:9.8px;line-height:20px;color:#fff;font-weight:bold;"><span style="letter-spacing:-0.73px">合计</span><span style="position:relative;top:-1.0px">:</span></div>
<div class="b" style="left:240px;top:588px;width:228.60px;height:19.80px;background:#1f93f1;"></div>
<div class="t" style="left:246.3px;top:590.00px;font-size:9.8px;line-height:20px;color:#fff;font-weight:bold;"><span style="position:relative;top:-1.0px;font-size:10px">-</span></div>
<div class="b" style="left:481px;top:588px;width:102.90px;height:19.80px;background:#1f93f1;"></div>
<div class="t" style="left:484.3px;top:590.00px;font-size:9.8px;line-height:20px;color:#fff;font-weight:bold;"><span style="position:relative;top:-1.0px;font-size:10px">-</span></div>
<div class="b" style="left:596px;top:588px;width:103.10px;height:19.80px;background:#1f93f1;"></div>
<div class="t" style="left:599.0px;top:590.00px;font-size:9.8px;line-height:20px;color:#fff;font-weight:bold;"><span style="position:relative;top:-1.0px;font-size:10px">2928.396500</span></div>
<div class="b" style="left:710.1px;top:588px;width:103.70px;height:19.80px;background:#1f93f1;"></div>
<div class="t" style="left:713.1px;top:590.00px;font-size:9.8px;line-height:20px;color:#fff;font-weight:bold;"><span style="position:relative;top:-1.0px;font-size:10px">2941.806000</span></div>
<div class="b" style="left:824.8px;top:588px;width:103.70px;height:19.80px;background:#1f93f1;"></div>
<div class="t" style="left:827.8px;top:590.00px;font-size:9.8px;line-height:20px;color:#fff;font-weight:bold;"><span style="position:relative;top:-1.0px;font-size:10px">24.740000</span></div>
<div class="b" style="left:939.5px;top:588px;width:103.70px;height:19.80px;background:#1f93f1;"></div>
<div class="t" style="left:942.5px;top:590.00px;font-size:9.8px;line-height:20px;color:#fff;font-weight:bold;"><span style="position:relative;top:-1.0px;font-size:10px">11.330500</span></div>
<div class="b" style="left:1055px;top:588px;width:102.90px;height:19.80px;background:#1f93f1;"></div>
<div class="b" style="left:1333px;top:93.8px;width:16.60px;height:519.20px;background:#f0f0f0;"></div>
<div class="b" style="left:1335px;top:178px;width:13.00px;height:383.50px;background:#c1c1c1;"></div>
<svg class="b" style="left:1336px;top:99px" width="11" height="8" viewBox="0 0 11 8"><polygon points="1.7,6.2 5.5,1.9 9.3,6.2" fill="#4a4a4a"/></svg>
<svg class="b" style="left:1336px;top:600px" width="11" height="8" viewBox="0 0 11 8"><polygon points="1.7,1.7 5.5,6 9.3,1.7" fill="#4a4a4a"/></svg>
<div class="b" style="left:1357px;top:85px;width:3.00px;height:539.00px;background:#e8ebf3;"></div>
<div class="b" style="left:1329.8px;top:509px;width:13.2px;height:50.5px;background:#3a88ea;border-radius:3px"></div>
<div class="t" style="left:1329.8px;width:13.2px;text-align:center;top:510.2px;font-size:9px;line-height:12px;color:#fff;-webkit-text-stroke:0.25px #fff">联</div>
<div class="t" style="left:1329.8px;width:13.2px;text-align:center;top:522.3px;font-size:9px;line-height:12px;color:#fff;-webkit-text-stroke:0.25px #fff">系</div>
<div class="t" style="left:1329.8px;width:13.2px;text-align:center;top:534.4px;font-size:9px;line-height:12px;color:#fff;-webkit-text-stroke:0.25px #fff">客</div>
<div class="t" style="left:1329.8px;width:13.2px;text-align:center;top:546.5px;font-size:9px;line-height:12px;color:#fff;-webkit-text-stroke:0.25px #fff">服</div>
<div class="b" style="left:1329.8px;top:563px;width:13.2px;height:13.4px;background:#3a88ea;border-radius:3px"></div>
<svg class="b" style="left:1330px;top:563px" width="13" height="13" viewBox="0 0 13 13"><polyline points="6.2,2.8 3.3,6.7 6.2,10.6" stroke="#fff" fill="none" stroke-width="0.9"/><polyline points="9.4,2.8 6.5,6.7 9.4,10.6" stroke="#fff" fill="none" stroke-width="0.9"/></svg>
<div class="b" style="left:1055.3px;top:503.7px;width:121.7px;height:121px;background:#4f4f4f;border:1px solid #6a6a6a;border-bottom:none;overflow:hidden"><div class="b" style="left:-2px;top:82px;width:105px;height:32px;background:#2e3e4e;filter:blur(7px);opacity:0.9"></div></div>
<svg class="b" style="left:1066px;top:514px" width="21" height="21" viewBox="0 0 21 21">
<rect x="1.5" y="1.5" width="16" height="15" fill="#111"/>
<path d="M5,9 Q9.5,4 14,9 Q9.5,14 5,9 Z" fill="none" stroke="#76b900" stroke-width="1.6"/>
<circle cx="9.5" cy="9" r="1.6" fill="#76b900"/>
</svg>
<svg class="b" style="left:1106px;top:514px" width="21" height="21" viewBox="0 0 21 21">
<path d="M2.5,7 L6.5,7 L11.5,2.5 L11.5,16.5 L6.5,12 L2.5,12 Z" fill="#e06a3a"/>
<path d="M6.5,7 L11.5,2.5 L11.5,9.5 Z" fill="#f0a070" opacity="0.7"/>
<path d="M13,6.5 Q15,9.5 13,12.5 M15,5 Q18,9.5 15,14" stroke="#4a3028" fill="none" stroke-width="1.2"/>
</svg>
<svg class="b" style="left:1146px;top:514px" width="21" height="21" viewBox="0 0 21 21">
<circle cx="9.5" cy="9.5" r="7.5" fill="#f0c020"/>
<path d="M2.5,11 Q9,15 16.5,9 L16,14 Q9,18 3.5,14 Z" fill="#2a9a30"/>
<path d="M6.8,5.5 L6.8,12 M3.6,8.7 L10,8.7" stroke="#2a8a2a" stroke-width="1.8"/>
<rect x="10" y="10" width="8.5" height="6" rx="2" fill="#3a8ef0"/>
<circle cx="12.3" cy="13" r="0.9" fill="#fff"/><circle cx="16" cy="13" r="0.9" fill="#fff"/>
</svg>
<svg class="b" style="left:1066px;top:553px" width="21" height="21" viewBox="0 0 21 21">
<path d="M8,3 L17,3 L16,17 L7,17 Z" fill="#f4f4f4"/>
<path d="M9.5,6 L14,6 M9.5,8.5 L14,8.5 M9.5,11 L13,11" stroke="#4aa8a0" stroke-width="1"/>
<path d="M2.5,9 Q2,15 9,15.5 L8.5,18 L12.5,14.5 L8.5,11 L9,13 Q5,13 4.5,9 Z" fill="#e020d0"/>
</svg>
<svg class="b" style="left:1106px;top:553px" width="21" height="21" viewBox="0 0 21 21">
<circle cx="10" cy="10" r="7.5" fill="#e8eef6"/>
<path d="M3.5,11 Q7,4 15.5,5.5 Q12,7 11,11 Q8,9.5 3.5,11 Z" fill="#3a90e8"/>
<path d="M6,14 Q11,11 16,10" stroke="#60a8f0" fill="none" stroke-width="1.2"/>
</svg>
<svg class="b" style="left:1145px;top:553px" width="22" height="21" viewBox="0 0 22 21">
<ellipse cx="8.5" cy="8.8" rx="5.6" ry="4.8" fill="#2ec04a"/>
<ellipse cx="13.5" cy="12.8" rx="5" ry="4.2" fill="#e8e8e8"/>
<circle cx="11.8" cy="12.4" r="0.7" fill="#777"/><circle cx="15" cy="12.4" r="0.7" fill="#777"/>
</svg>
<svg class="b" style="left:1066px;top:593px" width="21" height="21" viewBox="0 0 21 21">
<circle cx="10" cy="10.5" r="7" fill="#f4f4f4"/>
<circle cx="10" cy="10.5" r="6" fill="#38b038"/>
<path d="M6.3,10.6 L13.8,10.6 A3.9,3.9 0 1 0 12.9,13.2" stroke="#fff" fill="none" stroke-width="1.6"/>
</svg>
<div class="b" style="left:1055px;top:588px;width:1.20px;height:19.80px;background:#1f7fd0;"></div>
<div class="t" style="left:1097.6px;top:544.2px;font-size:19px;line-height:24px;color:rgba(172,172,172,0.85);transform:scaleX(1.118);transform-origin:0 0">激活 Windows</div>
<div class="t" style="left:1097.6px;top:570px;font-size:14px;line-height:18px;color:rgba(172,172,172,0.85);transform:scaleX(1.12);transform-origin:0 0">转到“设置”以激活 Windows。</div>
</body></html>
